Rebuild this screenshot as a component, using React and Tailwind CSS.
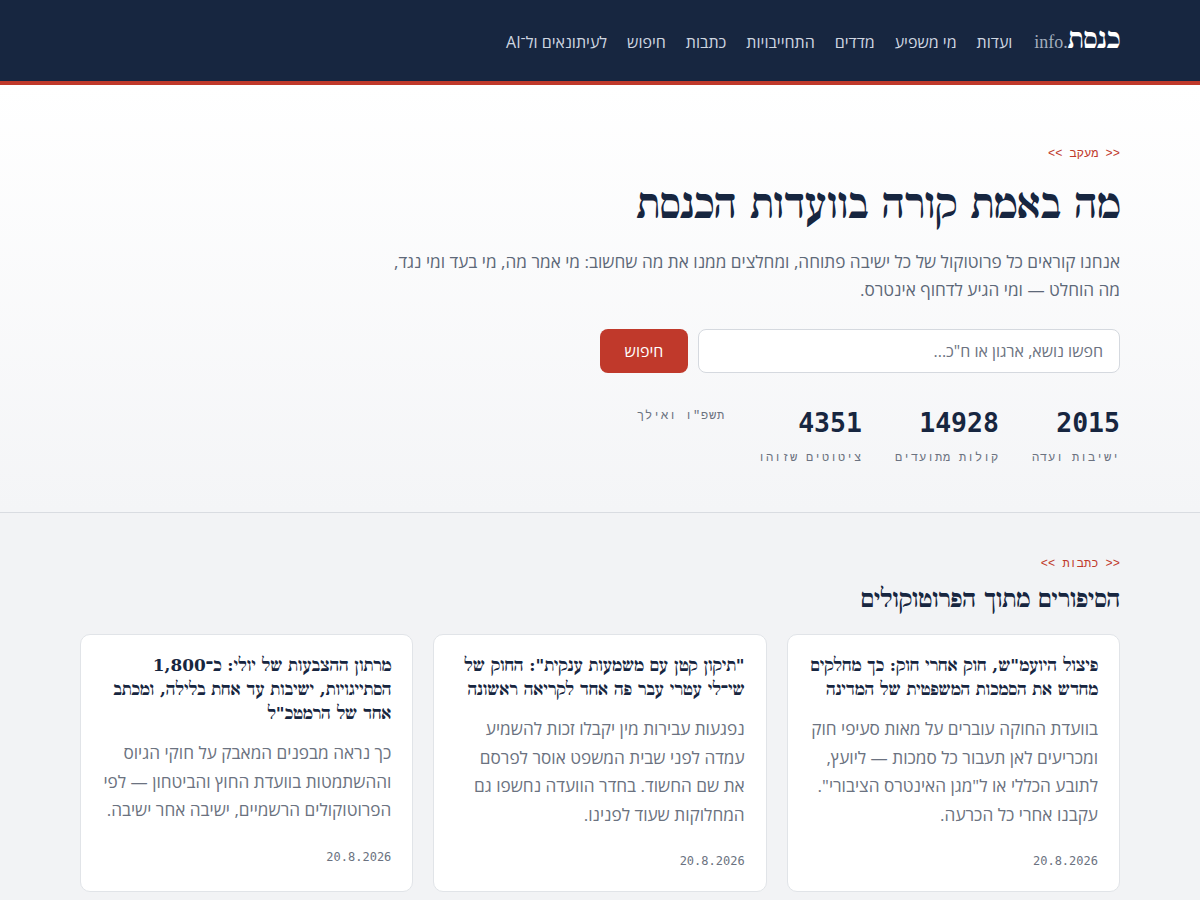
const navItems = ["ועדות", "מי משפיע", "מדדים", "התחייבויות", "כתבות", "חיפוש", "לעיתונאים ול־AI"];

const stats = [
  { n: "2015", l: "ישיבות ועדה" },
  { n: "14928", l: "קולות מתועדים" },
  { n: "4351", l: "ציטוטים שזוהו" },
];

const cards = [
  {
    t: 'פיצול היועמ"ש, חוק אחרי חוק: כך מחלקים מחדש את הסמכות המשפטית של המדינה',
    b: 'בוועדת החוקה עוברים על מאות סעיפי חוק ומכריעים לאן תעבור כל סמכות — ליועץ, לתובע הכללי או ל"מגן האינטרס הציבורי". עקבנו אחרי כל הכרעה.',
  },
  {
    t: '"תיקון קטן עם משמעות ענקית": החוק של שי־לי עטרי עבר פה אחד לקריאה ראשונה',
    b: "נפגעות עבירות מין יקבלו זכות להשמיע עמדה לפני שבית המשפט אוסר לפרסם את שם החשוד. בחדר הוועדה נחשפו גם המחלוקות שעוד לפנינו.",
  },
  {
    t: 'מרתון ההצבעות של יולי: כ־1,800 הסתייגויות, ישיבות עד אחת בלילה, ומכתב אחד של הרמטכ"ל',
    b: "כך נראה מבפנים המאבק על חוקי הגיוס וההשתמטות בוועדת החוץ והביטחון — לפי הפרוטוקולים הרשמיים, ישיבה אחר ישיבה.",
  },
];

export default function App() {
  return (
    <div dir="rtl" className="min-h-screen bg-[#f2f3f5] font-['Open_Sans',sans-serif]">
      <header className="bg-[#172640] border-b-4 border-[#c0392b]">
        <div className="mx-auto flex h-[81px] max-w-[1040px] items-center gap-[22px]">
          <div className="flex items-baseline whitespace-nowrap">
            <span className="font-['FreeSerif',serif] text-[27px] font-bold text-white">כנסת</span>
            <span className="font-['Liberation_Serif',serif] text-[18px] text-[#a3adbd]">.info</span>
          </div>
          <nav className="mt-0.5 flex items-center gap-5 text-[16px] text-[#cfd6e0]">
            {navItems.map((n) => (
              <span key={n} className="whitespace-nowrap">{n}</span>
            ))}
          </nav>
        </div>
      </header>

      <section className="border-b border-[#d9dce1] bg-linear-to-b from-white to-[#f4f5f7] pt-[61px] pb-[46px]">
        <div className="mx-auto max-w-[1040px]">
          <div className="font-['Liberation_Mono',monospace] text-[12px] leading-4 text-[#c0392b]">&lt;&lt; מעקב &gt;&gt;</div>
          <h1 className="mt-[18px] font-['DejaVu_Serif','FreeSerif',serif] text-[40px] font-bold leading-[48px] text-[#172640]">
            מה באמת קורה בוועדות הכנסת
          </h1>
          <p className="mt-5 max-w-[730px] text-[17.2px] leading-[28px] text-[#5d6878]">
            אנחנו קוראים כל פרוטוקול של כל ישיבה פתוחה, ומחלצים ממנו את מה שחשוב: מי אמר מה, מי בעד ומי נגד, מה הוחלט — ומי הגיע לדחוף אינטרס.
          </p>
          <div className="mt-[25px] flex gap-2.5">
            <input
              type="text"
              placeholder='חפשו נושא, ארגון או ח"כ...'
              className="h-11 w-[422px] rounded-lg border border-[#d5d9df] bg-white px-4 text-[16px] text-[#374151] outline-none placeholder:text-[#6b7280]"
            />
            <button className="h-11 w-[88px] rounded-lg bg-[#c0392b] text-[16px] text-white">חיפוש</button>
          </div>
          <div className="mt-[33px] flex items-start gap-[33px]">
            {stats.map((s) => (
              <div key={s.n} className="flex flex-col">
                <div className="font-['DejaVu_Sans_Mono',monospace] text-[26.5px] font-bold leading-[34px] text-[#172640]">{s.n}</div>
                <div className="mt-2.5 font-['Liberation_Mono',monospace] text-[12px] leading-4 tracking-[0.8px] text-[#6b7280]">{s.l}</div>
              </div>
            ))}
            <div className="mt-0.5 font-['Liberation_Mono',monospace] text-[12px] leading-4 tracking-[0.8px] text-[#6b7280]">תשפ"ו ואילך</div>
          </div>
        </div>
      </section>

      <section className="pt-[43px] pb-10">
        <div className="mx-auto max-w-[1040px]">
          <div className="font-['Liberation_Mono',monospace] text-[12px] leading-4 text-[#c0392b]">&lt;&lt; כתבות &gt;&gt;</div>
          <h2 className="mt-3 font-['DejaVu_Serif','FreeSerif',serif] text-[24px] font-bold leading-[30px] text-[#172640]">
            הסיפורים מתוך הפרוטוקולים
          </h2>
          <div className="mt-5 grid grid-cols-3 gap-5">
            {cards.map((c, i) => (
              <article key={i} className="rounded-[10px] border border-[#e1e4e8] bg-white px-[21px] pt-[18px] pb-[22px]">
                <h3 className="font-['DejaVu_Serif','FreeSerif',serif] text-[16.9px] font-bold leading-[24px] text-[#172640]">{c.t}</h3>
                <p className="mt-3.5 text-[17.2px] leading-[28.5px] text-[#6b7280]">{c.b}</p>
                <div className="mt-6 font-['DejaVu_Sans_Mono',monospace] text-[12px] leading-4 text-[#6b7280]">20.8.2026</div>
              </article>
            ))}
          </div>
        </div>
      </section>
    </div>
  );
}
